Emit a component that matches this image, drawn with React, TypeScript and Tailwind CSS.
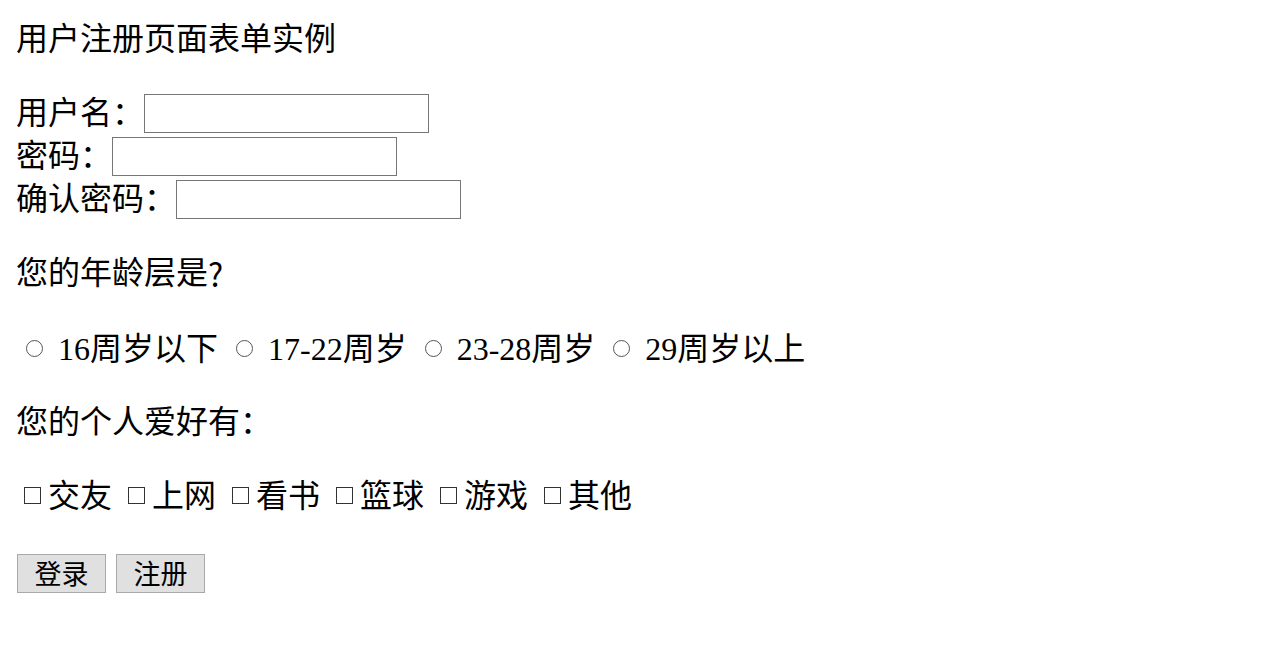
export default function App() {
  const ages = ['16周岁以下', '17-22周岁', '23-28周岁', '29周岁以上'];
  const hobbies = ['交友', '上网', '看书', '篮球', '游戏', '其他'];

  return (
    <div
      className="min-h-screen bg-white text-black px-4 text-[32px]"
      style={{ fontFamily: '"Liberation Serif", "Noto Sans CJK SC", serif' }}
    >
      {/* Title */}
      <div className="pt-[18px] h-[61px] flex items-center leading-[43px]">用户注册页面表单实例</div>

      {/* Account fields */}
      <div className="mt-[30px] flex flex-col">
        <div className="h-[43px] flex items-center">
          <span>用户名：</span>
          <input type="text" className="mt-[2px] w-[285px] h-[39px] border border-[#767676] bg-white outline-none" />
        </div>
        <div className="h-[43px] flex items-center">
          <span>密码：</span>
          <input type="password" className="mt-[2px] w-[285px] h-[39px] border border-[#767676] bg-white outline-none" />
        </div>
        <div className="h-[43px] flex items-center">
          <span>确认密码：</span>
          <input type="password" className="mt-[2px] w-[285px] h-[39px] border border-[#767676] bg-white outline-none" />
        </div>
      </div>

      {/* Age */}
      <div className="mt-[31px] h-[43px] flex items-center">
        您的年龄层是<span className="font-['Noto_Sans_CJK_SC',sans-serif]">?</span>
      </div>
      <div className="mt-[33px] h-[43px] flex items-center pl-[10px] gap-[18px]">
        {ages.map((a) => (
          <label key={a} className="flex items-center gap-[15px]">
            <span className="w-[17px] h-[17px] rounded-full border border-[#555] inline-block" />
            <span>{a}</span>
          </label>
        ))}
      </div>

      {/* Hobbies */}
      <div className="mt-[30px] h-[43px] flex items-center">您的个人爱好有：</div>
      <div className="mt-[31px] h-[43px] flex items-center pl-2 gap-4">
        {hobbies.map((h) => (
          <label key={h} className="flex items-center gap-[7px]">
            <span className="w-[17px] h-[17px] border border-[#333] inline-block" />
            <span>{h}</span>
          </label>
        ))}
      </div>

      {/* Buttons */}
      <div className="mt-[37px] flex items-center gap-[10px] pl-px">
        <button className="w-[89px] h-[39px] bg-[#e0e0e0] border border-[#a9a9a9] text-[27px] leading-none pt-[3px]">登录</button>
        <button className="w-[89px] h-[39px] bg-[#e0e0e0] border border-[#a9a9a9] text-[27px] leading-none pt-[3px]">注册</button>
      </div>
    </div>
  );
}
